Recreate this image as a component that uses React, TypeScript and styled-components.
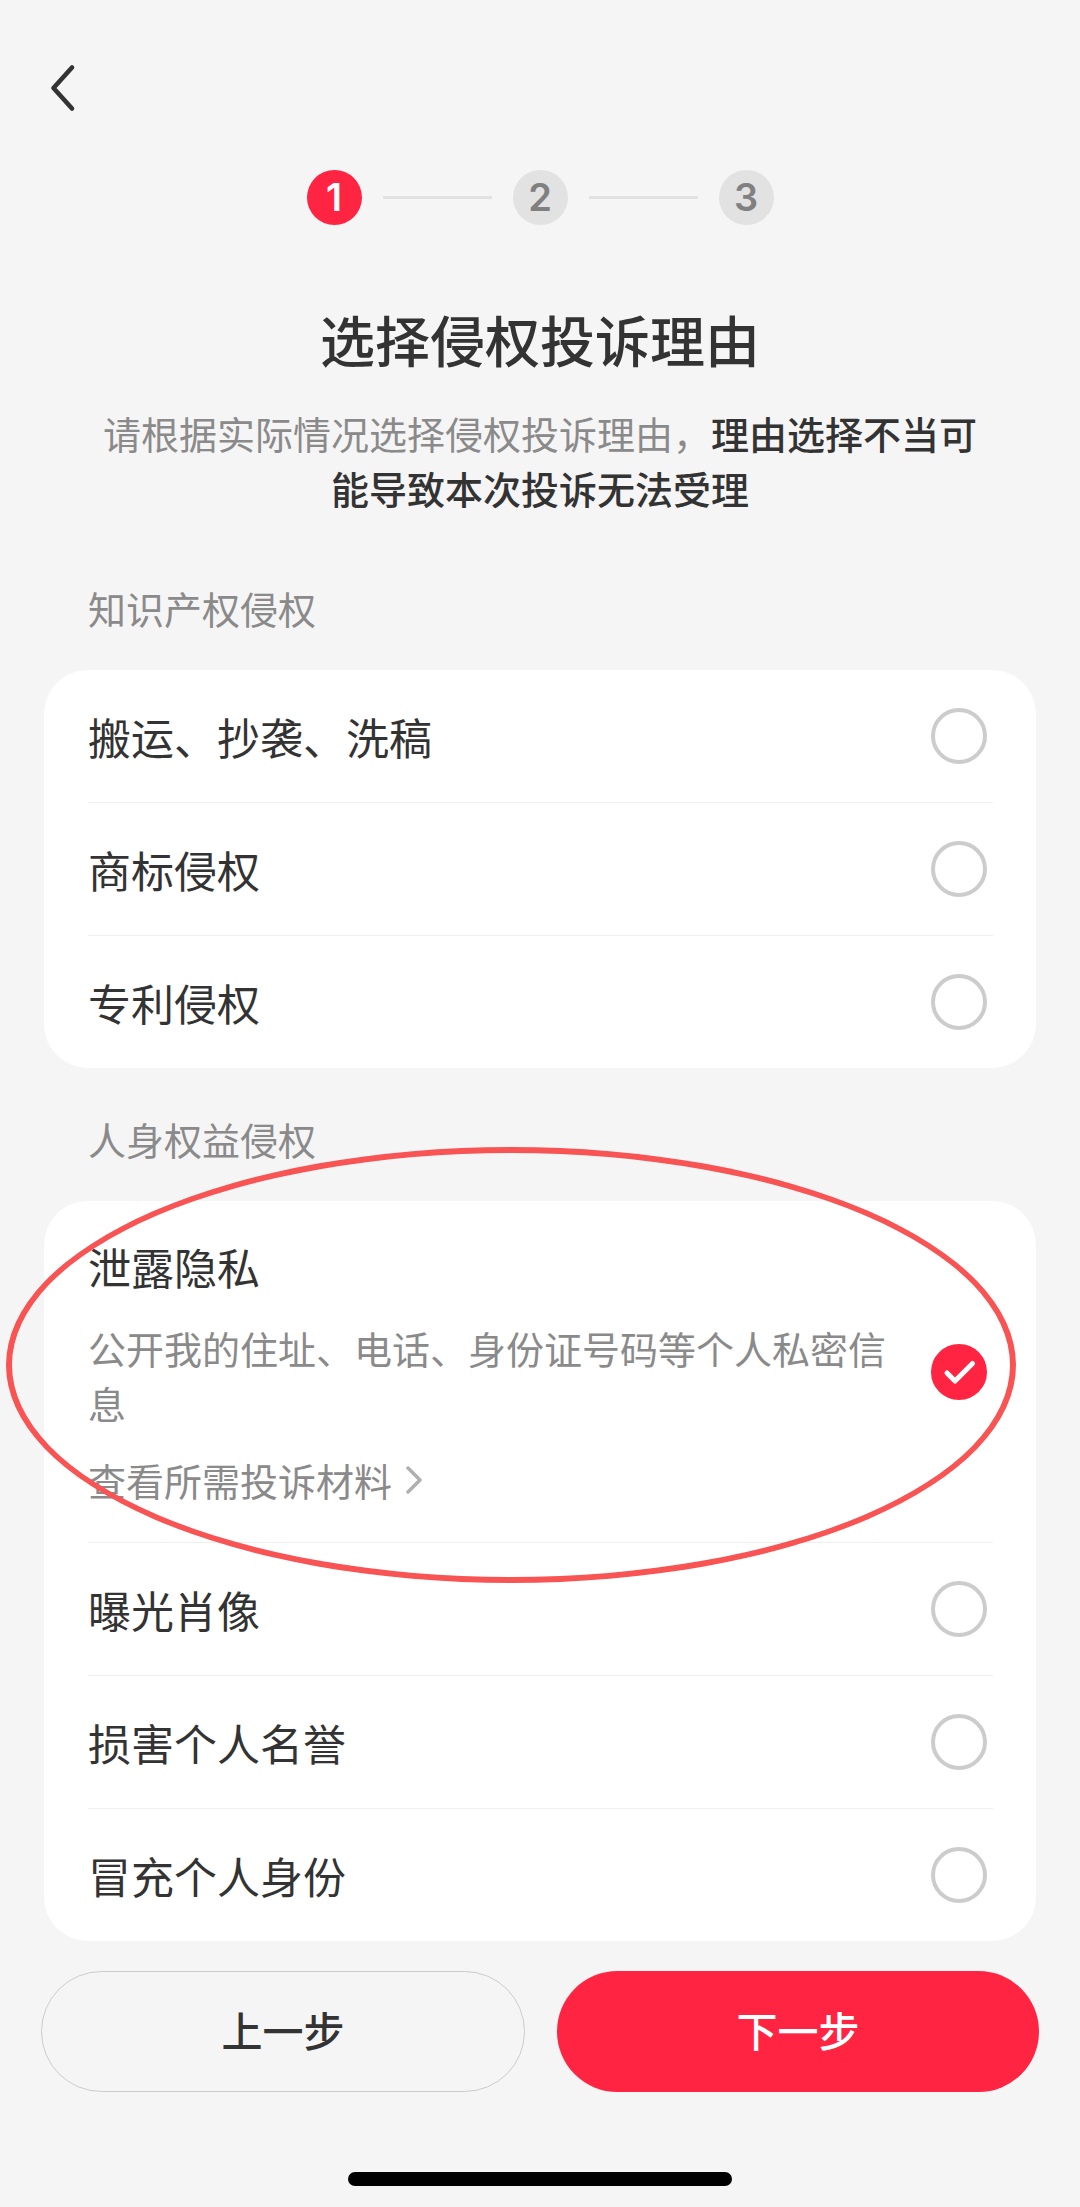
import React, { useState } from "react";
import styled, { createGlobalStyle } from "styled-components";

const GlobalStyle = createGlobalStyle`
  * { box-sizing: border-box; }
  body {
    margin: 0;
    background: #f5f5f5;
    color: #333333;
    font-family: "Noto Sans CJK SC", sans-serif;
    font-size: 38px;
    line-height: 55px;
  }
  button { font-family: inherit; cursor: pointer; }
`;

const Page = styled.div`
  min-height: 100vh;
  display: flex;
  flex-direction: column;
`;

const TopBar = styled.header`
  height: 170px;
  padding: 5px 40px 0;
  display: flex;
  align-items: center;
`;

const BackButton = styled.button`
  display: flex;
  padding: 0 8px;
  border: 0;
  background: none;
  color: #333333;
`;

const Steps = styled.ol`
  display: flex;
  justify-content: center;
  align-items: center;
  gap: 21px;
  margin: 0;
  padding: 0;
  list-style: none;
`;

const Step = styled.li<{ $active?: boolean }>`
  width: 55px;
  height: 55px;
  border-radius: 50%;
  display: flex;
  align-items: center;
  justify-content: center;
  font-family: Inter, sans-serif;
  font-weight: 600;
  background: ${(p) => (p.$active ? "#ff2442" : "#e2e2e2")};
  color: ${(p) => (p.$active ? "#ffffff" : "#808080")};
`;

const StepLine = styled.li`
  width: 109px;
  height: 3px;
  background: #e2e2e2;
`;

const Intro = styled.div`
  padding: 73px 86px 0;
  text-align: center;
`;

const Title = styled.h1`
  margin: 0 0 27px;
  font-size: 55px;
  line-height: 80px;
  font-weight: 500;
`;

const Lead = styled.p`
  margin: 0;
  color: #8a8a8a;

  strong {
    font-weight: 500;
    color: #333333;
  }
`;

const Section = styled.fieldset`
  margin: 0;
  padding: 0 44px;
  border: 0;
  min-width: 0;
`;

const SectionLabel = styled.legend<{ $first?: boolean }>`
  padding: ${(p) => (p.$first ? "65px" : "43px")} 0 35px 44px;
  color: #8a8a8a;
`;

const Card = styled.div`
  padding: 0 43px 0 44px;
  border-radius: 44px;
  background: #ffffff;
`;

const Row = styled.div`
  position: relative;
  display: flex;
  align-items: center;
  gap: 24px;
  min-height: 132px;
  padding-right: 6px;

  & + & {
    border-top: 1px solid #efefef;
    min-height: 133px;
  }
`;

const RowBody = styled.div`
  flex: 1;
  padding: 34px 0 35px;
`;

const RowLabel = styled.label`
  display: block;
  font-size: 43px;
  line-height: 62px;
`;

const Hint = styled.p`
  margin: 23px 0 22px;
  color: #8a8a8a;
`;

const MaterialLink = styled.a`
  display: flex;
  align-items: center;
  gap: 14px;
  color: #8a8a8a;
  text-decoration: none;

  svg { color: #b0b0b0; }
`;

const RadioBox = styled.span`
  display: grid;
  width: 56px;
  height: 56px;
  color: #ffffff;

  > * { grid-area: 1 / 1; }
  svg { pointer-events: none; }
`;

const Radio = styled.input`
  appearance: none;
  width: 56px;
  height: 56px;
  margin: 0;
  border: 4px solid #cccccc;
  border-radius: 50%;

  &:checked {
    border-color: #ff2442;
    background: #ff2442;
  }
`;

/* Hand-drawn style ring laid over the highlighted option */
const Ring = styled.span`
  position: absolute;
  z-index: 1;
  inset: -54px -23px -41px -82px;
  border: 6px solid #f85454;
  border-radius: 50%;
  pointer-events: none;
`;

const Actions = styled.div`
  display: flex;
  gap: 32px;
  padding: 30px 41px 0;
`;

const ActionButton = styled.button<{ $primary?: boolean }>`
  flex: 1;
  height: 121px;
  padding: 0 0 6px;
  border-radius: 61px;
  border: ${(p) => (p.$primary ? "0" : "1px solid #cccccc")};
  background: ${(p) => (p.$primary ? "#ff2442" : "transparent")};
  color: ${(p) => (p.$primary ? "#ffffff" : "#333333")};
  font-size: 41px;
  font-weight: 500;
`;

const HomeIndicator = styled.div`
  width: 384px;
  height: 14px;
  margin: auto auto 21px;
  border-radius: 7px;
  background: #000000;
`;

type Option = { id: string; label: string; hint?: string; link?: string };
type Group = { title: string; options: Option[] };

const groups: Group[] = [
  {
    title: "知识产权侵权",
    options: [
      { id: "copy", label: "搬运、抄袭、洗稿" },
      { id: "trademark", label: "商标侵权" },
      { id: "patent", label: "专利侵权" },
    ],
  },
  {
    title: "人身权益侵权",
    options: [
      {
        id: "privacy",
        label: "泄露隐私",
        hint: "公开我的住址、电话、身份证号码等个人私密信息",
        link: "查看所需投诉材料",
      },
      { id: "portrait", label: "曝光肖像" },
      { id: "reputation", label: "损害个人名誉" },
      { id: "identity", label: "冒充个人身份" },
    ],
  },
];

export default function App() {
  const [selected, setSelected] = useState("privacy");

  return (
    <Page lang="zh-CN">
      <GlobalStyle />
      <TopBar>
        <BackButton type="button" aria-label="返回">
          <svg width="30" height="50" viewBox="0 0 30 50" fill="none" stroke="currentColor" strokeWidth="4.600" strokeLinecap="round" strokeLinejoin="round">
            <path d="M24 4.500L5.500 25L24 45.500" />
          </svg>
        </BackButton>
      </TopBar>
      <Steps>
        <Step $active aria-current="step">1</Step>
        <StepLine aria-hidden="true" />
        <Step>2</Step>
        <StepLine aria-hidden="true" />
        <Step>3</Step>
      </Steps>
      <Intro>
        <Title>选择侵权投诉理由</Title>
        <Lead>
          请根据实际情况选择侵权投诉理由，<strong>理由选择不当可能导致本次投诉无法受理</strong>
        </Lead>
      </Intro>
      {groups.map((group, index) => (
        <Section key={group.title}>
          <SectionLabel $first={index === 0}>{group.title}</SectionLabel>
          <Card>
            {group.options.map((option) => (
              <Row key={option.id}>
                <RowBody>
                  <RowLabel htmlFor={option.id}>{option.label}</RowLabel>
                  {option.hint && <Hint>{option.hint}</Hint>}
                  {option.link && (
                    <MaterialLink href="#materials">
                      {option.link}
                      <svg width="16" height="28" viewBox="0 0 16 28" fill="none" stroke="currentColor" strokeWidth="3.500" strokeLinecap="round" strokeLinejoin="round">
                        <path d="M2 2L14 14L2 26" />
                      </svg>
                    </MaterialLink>
                  )}
                </RowBody>
                <RadioBox>
                  <Radio
                    type="radio"
                    name="reason"
                    id={option.id}
                    checked={selected === option.id}
                    onChange={() => setSelected(option.id)}
                  />
                  {selected === option.id && (
                    <svg width="56" height="56" viewBox="0 0 56 56" fill="none" stroke="currentColor" strokeWidth="5" strokeLinecap="round" strokeLinejoin="round">
                      <path d="M16 29L24 37L41.500 19.500" />
                    </svg>
                  )}
                </RadioBox>
                {option.id === "privacy" && <Ring />}
              </Row>
            ))}
          </Card>
        </Section>
      ))}
      <Actions>
        <ActionButton type="button">上一步</ActionButton>
        <ActionButton type="button" $primary>下一步</ActionButton>
      </Actions>
      <HomeIndicator />
    </Page>
  );
}
